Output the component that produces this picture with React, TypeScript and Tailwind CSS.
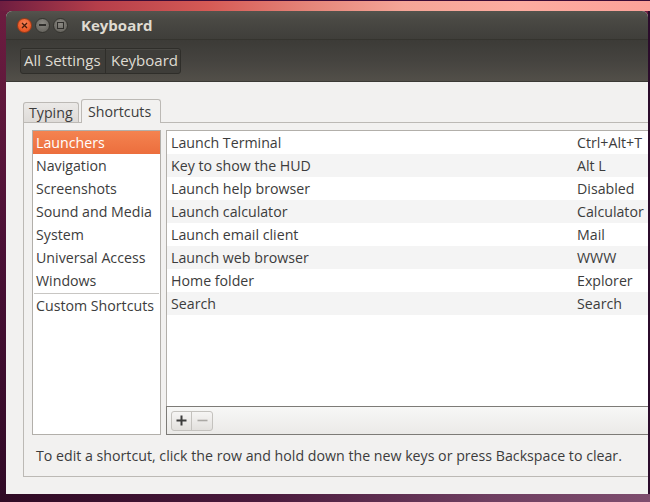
import React from "react";

const categories = [
  "Launchers",
  "Navigation",
  "Screenshots",
  "Sound and Media",
  "System",
  "Universal Access",
  "Windows",
];

const shortcuts: [string, string][] = [
  ["Launch Terminal", "Ctrl+Alt+T"],
  ["Key to show the HUD", "Alt L"],
  ["Launch help browser", "Disabled"],
  ["Launch calculator", "Calculator"],
  ["Launch email client", "Mail"],
  ["Launch web browser", "WWW"],
  ["Home folder", "Explorer"],
  ["Search", "Search"],
];

export default function App() {
  return (
    <div
      className="w-[650px] h-[502px] overflow-hidden flex flex-col bg-[linear-gradient(180deg,#6e1d40_0%,#4a1035_50%,#300a26_100%)] font-['Open_Sans','Noto_Sans',sans-serif] text-[14.2px] text-[#3c3c3c]"
    >
      {/* top desktop strip */}
      <div className="h-[11px] shrink-0 border-t border-[#3c0c36] bg-[linear-gradient(90deg,#6e1d40_0%,#b53e4a_15%,#d65a55_32%,#e6867a_48%,#f5a597_62%,#fdaca0_80%,#fca299_100%)]" />
      <div className="flex flex-1 min-h-0">
        <div className="w-[6px] shrink-0" />
        {/* window */}
        <div className="flex-1 min-w-0 flex flex-col rounded-t-[6px] overflow-hidden bg-[#f2f1f0]">
          {/* title bar */}
          <div className="h-[29px] shrink-0 flex items-center pl-[11px] bg-[linear-gradient(180deg,#54534d_0%,#4a4944_30%,#3f3e3a_100%)] border-b border-[#35342f]">
            <div className="flex gap-[3px]">
              <div className="w-[15px] h-[15px] rounded-full bg-[radial-gradient(circle_at_50%_35%,#f8845a_0%,#ef5f2c_55%,#d9491a_100%)] border border-[#9c3a17] flex items-center justify-center">
                <svg width="7" height="7" viewBox="0 0 7 7">
                  <path d="M1 1L6 6M6 1L1 6" stroke="#4a1d0c" strokeWidth="1.3" />
                </svg>
              </div>
              <div className="w-[15px] h-[15px] rounded-full bg-[radial-gradient(circle_at_50%_35%,#8c8a84_0%,#6f6d67_60%,#5c5a55_100%)] border border-[#35342f] flex items-center justify-center">
                <div className="w-[7px] h-[1.5px] bg-[#2f2e2b]" />
              </div>
              <div className="w-[15px] h-[15px] rounded-full bg-[radial-gradient(circle_at_50%_35%,#8c8a84_0%,#6f6d67_60%,#5c5a55_100%)] border border-[#35342f] flex items-center justify-center">
                <div className="w-[7px] h-[7px] border border-[#2f2e2b]" />
              </div>
            </div>
            <div className="ml-[13px] text-[15px] font-bold text-[#dfdbd2] leading-none">Keyboard</div>
          </div>
          {/* toolbar */}
          <div className="h-[42px] shrink-0 flex items-center pl-[14px] bg-[linear-gradient(180deg,#3c3b37_0%,#45433f_50%,#524f49_100%)] border-b border-[#3a3935]">
            <div className="flex h-[26px] rounded-[3px] border border-[#2f2e2a] bg-[#3e3d39] shadow-[inset_0_1px_0_rgba(255,255,255,0.06)]">
              <div className="w-[85px] flex items-center pl-[3px] text-[15px] text-[#dfdbd2] border-r border-[#2f2e2a]">All Settings</div>
              <div className="w-[74px] flex items-center pl-[5px] text-[15px] text-[#dfdbd2]">Keyboard</div>
            </div>
          </div>
          {/* content */}
          <div className="flex-1 min-h-0 flex flex-col pl-[17px] pt-[17px] pb-[17px]">
            {/* tabs */}
            <div className="flex items-end h-[23px] shrink-0 pl-0">
              <div className="h-[20px] w-[56px] flex items-center pl-[5px] border border-b-0 border-[#bcb9b5] rounded-t-[3px] bg-[linear-gradient(180deg,#ebe9e7_0%,#dedbd8_100%)]">Typing</div>
              <div className="relative top-[1px] ml-[2px] h-[24px] w-[80px] flex items-center pl-[6px] border border-b-0 border-[#bcb9b5] rounded-t-[3px] bg-[#f2f1f0] z-10">Shortcuts</div>
            </div>
            {/* frame */}
            <div className="flex-1 min-h-0 flex flex-col border-t border-l border-b border-[#bcb9b5] pl-[8px] pt-[7px]">
              <div className="flex h-[305px] shrink-0">
                {/* category list */}
                <div className="w-[129px] shrink-0 bg-white border border-[#b2afaa] flex flex-col">
                  {categories.map((c, i) => (
                    <div
                      key={c}
                      className={
                        i === 0
                          ? "h-[23px] flex items-center pl-[3px] text-white bg-[linear-gradient(180deg,#f48350_0%,#ec6e3d_100%)]"
                          : "h-[23px] flex items-center pl-[3px]"
                      }
                    >
                      {c}
                    </div>
                  ))}
                  <div className="mx-[1px] mt-[1px] h-[1px] bg-[#c8c6c3]" />
                  <div className="h-[23px] flex items-center pl-[3px]">Custom Shortcuts</div>
                </div>
                {/* shortcuts tree */}
                <div className="ml-[5px] flex-1 min-w-0 flex flex-col">
                  <div className="flex-1 min-h-0 bg-white border-t border-l border-[#b2afaa] flex flex-col">
                    {shortcuts.map(([a, b], i) => (
                      <div
                        key={a}
                        className={
                          i % 2 === 1
                            ? "h-[23px] shrink-0 flex items-center bg-[#f4f4f4]"
                            : "h-[23px] shrink-0 flex items-center"
                        }
                      >
                        <div className="w-[410px] shrink-0 pl-[4px] whitespace-nowrap">{a}</div>
                        <div className="whitespace-nowrap">{b}</div>
                      </div>
                    ))}
                  </div>
                  <div className="h-[29px] shrink-0 border-t border-l border-b border-[#7d7b77] bg-[linear-gradient(180deg,#f7f7f6_0%,#ebeae8_100%)] flex items-center pl-[4px]">
                    <div className="flex h-[20px] rounded-[3px] border border-[#c4c2be] bg-[linear-gradient(180deg,#f6f5f4_0%,#e2e0dd_100%)]">
                      <div className="w-[20px] flex items-center justify-center border-r border-[#c4c2be]">
                        <svg width="11" height="11" viewBox="0 0 11 11">
                          <path d="M5.5 0.5V10.5M0.5 5.5H10.5" stroke="#3c3c3c" strokeWidth="2" />
                        </svg>
                      </div>
                      <div className="w-[20px] flex items-center justify-center">
                        <svg width="11" height="11" viewBox="0 0 11 11">
                          <path d="M0.5 5.5H10.5" stroke="#aaa8a4" strokeWidth="1.6" />
                        </svg>
                      </div>
                    </div>
                  </div>
                </div>
              </div>
              <div className="mt-[10px] pl-[4px] whitespace-nowrap">
                To edit a shortcut, click the row and hold down the new keys or press Backspace to clear.
              </div>
            </div>
          </div>
        </div>
        <div className="w-[2px] shrink-0 bg-[#2b0b2b]" />
      </div>
      {/* bottom strip */}
      <div className="h-[8px] shrink-0 bg-[linear-gradient(90deg,#2f0a24_0%,#4a1a3c_40%,#6e3e60_75%,#7e4d6e_100%)]" />
    </div>
  );
}
